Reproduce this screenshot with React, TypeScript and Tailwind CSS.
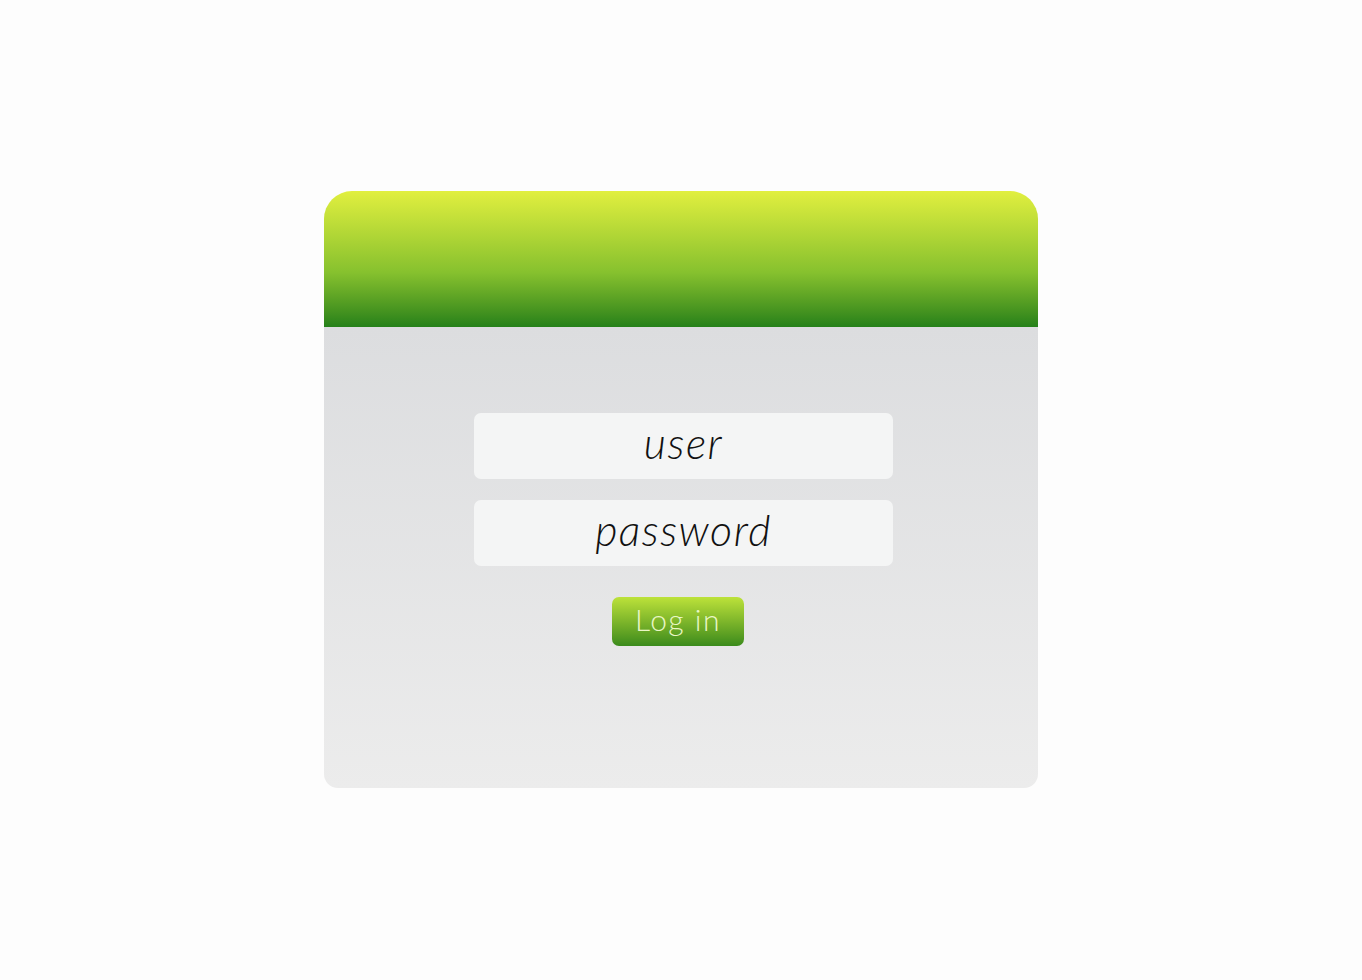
export default function App() {
  return (
    <div className="flex h-[980px] w-full items-center justify-center bg-[#fdfdfd] font-['Lato',sans-serif]">
      <div className="-mt-[1px] flex h-[597px] w-[714px] flex-col overflow-hidden rounded-t-[28px] rounded-b-[14px]">
        <div className="h-[136px] bg-gradient-to-b from-[#e1ef3f] via-[#86c12e] via-60% to-[#24811a]" />
        <div className="flex flex-1 flex-col items-center bg-gradient-to-b from-[#dcdddf] to-[#ececec] pt-[86px]">
          <div className="flex flex-col gap-[21px] pl-[5px]">
            <div className="flex h-[66px] w-[419px] items-center justify-center rounded-[7px] bg-[#f4f5f5] pb-[7px] text-[43px] font-light italic leading-none tracking-[1.5px] text-[#111]">
              user
            </div>
            <div className="flex h-[66px] w-[419px] items-center justify-center rounded-[7px] bg-[#f4f5f5] pb-[7px] text-[43px] font-light italic leading-none tracking-[1.5px] text-[#111]">
              password
            </div>
          </div>
          <button className="mt-[31px] mr-[6px] flex h-[49px] w-[132px] items-center justify-center rounded-[7px] bg-gradient-to-b from-[#bde23a] to-[#3a8b1c] pb-[6px] text-[30px] font-light leading-none tracking-[1.5px] text-[#eaf7c6]">
            Log in
          </button>
        </div>
      </div>
    </div>
  );
}
